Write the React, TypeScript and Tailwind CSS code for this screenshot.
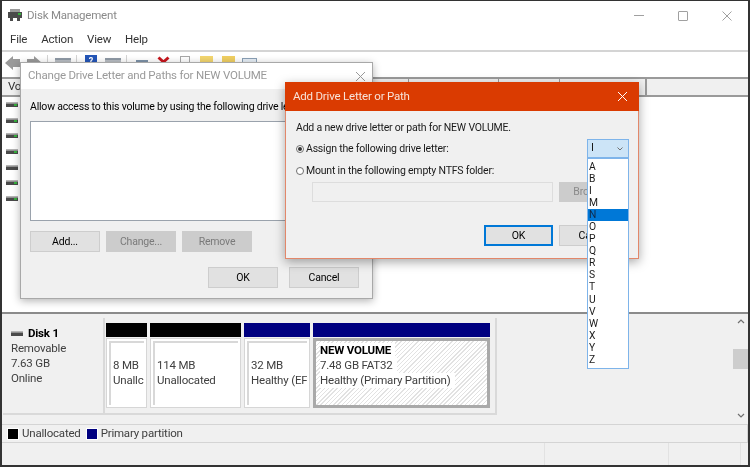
// App.tsx
// Disk Management window with the two drive letter dialogs open

const font = { fontFamily: 'Roboto, "Noto Sans", sans-serif' };

const LETTERS = ["A", "B", "I", "M", "N", "O", "P", "Q", "R", "S", "T", "U", "V", "W", "X", "Y", "Z"];

function DiskIcon({ led = true }: { led?: boolean }) {
  return (
    <svg width="12" height="6" viewBox="0 0 12 6">
      <rect x="0" y="0" width="12" height="1.5" fill="#b5b5b5" />
      <rect x="0" y="1.5" width="12" height="3.5" fill="#4a4a4a" />
      {led && <rect x="8" y="2" width="3" height="2" fill="#35b13c" />}
    </svg>
  );
}

function Toolbar() {
  return (
    <div className="flex h-[25px] items-start bg-white pl-[3px] pt-[3px]">
      <svg width="38" height="16" viewBox="0 0 38 16">
        <path d="M0 8 L8 1 V4 H15 V12 H8 V15 Z" fill="#9a9a9a" />
        <path d="M37 8 L29 1 V4 H22 V12 H29 V15 Z" fill="#9a9a9a" />
      </svg>
      <div className="ml-[4px] h-[18px] w-px bg-[#d4d4d4]" />
      <div className="ml-[7px] mt-[3px] h-[12px] w-[16px] border-t-2 border-[#8f9aa6] bg-[#b9bec4]" />
      <div className="ml-[5px] h-[18px] w-px bg-[#d4d4d4]" />
      <div className="ml-[8px] flex h-[14px] w-[12px] items-center justify-center bg-[#2456b8] text-[9px] font-bold text-white">?</div>
      <div className="ml-[8px] mt-[3px] h-[12px] w-[16px] border-t-2 border-[#8f9aa6] bg-[#b9bec4]" />
      <div className="ml-[5px] h-[18px] w-px bg-[#d4d4d4]" />
      <div className="ml-[9px] mt-[5px] h-[10px] w-[12px] border-t-2 border-[#7e93a8] bg-[#c5ccd3]" />
      <svg className="ml-[9px] mt-[1px]" width="13" height="12" viewBox="0 0 13 12">
        <path d="M1.5 1.5 L11.5 10.5 M11.5 1.5 L1.5 10.5" stroke="#c8161d" strokeWidth="3" />
      </svg>
      <div className="ml-[10px] mt-[1px] h-[14px] w-[10px] border border-[#a8a8a8] bg-white" />
      <div className="ml-[10px] mt-[1px] h-[12px] w-[13px] bg-[#f3d66f]" />
      <div className="ml-[9px] mt-[1px] h-[12px] w-[13px] bg-[#f0cf62]" />
      <div className="ml-[7px] mt-[3px] h-[12px] w-[15px] border border-[#8aa0b5] bg-[#e6eef6]" />
    </div>
  );
}

function Partition({ width, color, lines, className = "" }: { width: string; color: string; lines: string[]; className?: string }) {
  return (
    <div className={`flex flex-col ${width} ${className}`}>
      <div className={`h-[14px] ${color}`} />
      <div className="mt-[1px] h-[72px] overflow-hidden whitespace-nowrap border border-[#d6d6d6] bg-white p-[2px]">
        <div className="h-full overflow-hidden border-l-2 border-t-2 border-[#d8d8d8] pl-[2px] pt-[15px]">
          {lines.map((l) => (
            <div key={l}>{l}</div>
          ))}
        </div>
      </div>
    </div>
  );
}

function DiskPanel() {
  return (
    <div className="flex h-[112px] border-t-2 border-[#8b8b8b] bg-[#f0f0f0]">
      <div className="flex flex-1 items-start pl-px pt-[4px]">
        {/* Disk info card */}
        <div className="h-[97px] w-[102px] border-b-2 border-r-2 border-[#d9d9d9] bg-[#f0f0f0] pl-[8px] pt-[8px] text-[11.5px] leading-[15px] text-[#404040]">
          <div className="flex items-center gap-[5px] font-bold text-black">
            <DiskIcon led={false} />
            <span>Disk 1</span>
          </div>
          <div>Removable</div>
          <div>7.63 GB</div>
          <div>Online</div>
        </div>

        {/* Partition map */}
        <div className="flex h-[97px] border-b-2 border-r-2 border-[#d9d9d9] pb-[5px] pl-px pr-[5px] pt-[5px] text-[11.5px] leading-[15px] text-[#404040]">
          <Partition width="w-[41px]" color="bg-black" lines={["8 MB", "Unallc"]} />
          <Partition width="w-[91px]" color="bg-black" lines={["114 MB", "Unallocated"]} className="ml-[3px]" />
          <Partition width="w-[66px]" color="bg-[#000080]" lines={["32 MB", "Healthy (EF"]} className="ml-[3px]" />
          <div className="ml-[3px] flex w-[177px] flex-col">
            <div className="h-[14px] bg-[#000080]" />
            <div
              className="mt-[1px] h-[72px] border-[3px] border-[#a9a9a9] pl-[4px] pt-[2px] text-[#404040]"
              style={{ backgroundImage: "repeating-linear-gradient(135deg, #e2e2e2 0 1px, #ffffff 1px 3px)" }}
            >
              <div className="w-max bg-white pr-1 font-bold text-black">NEW VOLUME</div>
              <div className="w-max bg-white pr-1">7.48 GB FAT32</div>
              <div className="w-max bg-white pr-1">Healthy (Primary Partition)</div>
            </div>
          </div>
        </div>
      </div>

      {/* Scrollbar */}
      <div className="flex w-[15px] flex-col items-center pb-[6px] pt-[5px]">
        <svg width="8" height="5" viewBox="0 0 8 5"><path d="M1 4 L4 1 L7 4" fill="none" stroke="#707070" strokeWidth="1.2" /></svg>
        <div className="mt-[25px] h-[20px] w-[15px] bg-[#cdcdcd]" />
        <svg className="mt-auto" width="8" height="5" viewBox="0 0 8 5"><path d="M1 1 L4 4 L7 1" fill="none" stroke="#707070" strokeWidth="1.2" /></svg>
      </div>
    </div>
  );
}

function DialogButton({ label, disabled, className = "" }: { label: string; disabled?: boolean; className?: string }) {
  return (
    <div
      className={`flex h-[21px] w-[70px] items-center justify-center border text-[10.5px] ${className} ${
        disabled ? "border-[#cccccc] bg-[#cccccc] text-[#7a7a7a]" : "border-[#cdcdcd] bg-[#e1e1e1] text-black"
      }`}
    >
      {label}
    </div>
  );
}

function ChangeLetterDialog() {
  return (
    <div className="absolute left-[18px] top-[61px] h-[237px] w-[353px] border border-[#a8a8a8] bg-[#f0f0f0] shadow-[0_2px_8px_rgba(0,0,0,0.3)]">
      <div className="flex h-[26px] items-center justify-between bg-white pl-[7px] pr-[6px] text-[11.5px] text-[#9a9a9a]">
        <span>Change Drive Letter and Paths for NEW VOLUME</span>
        <svg width="11" height="11" viewBox="0 0 11 11"><path d="M1 1 L10 10 M10 1 L1 10" stroke="#9a9a9a" strokeWidth="1" /></svg>
      </div>
      <div className="px-[9px] pt-[10px] text-[10.5px] text-black">
        <div className="whitespace-nowrap leading-[16px]">Allow access to this volume by using the following drive letter and paths:</div>
        <div className="mt-[6px] h-[100px] w-[320px] border border-[#9aa2ac] bg-white" />
        <div className="mt-[10px] flex gap-[6px]">
          <DialogButton label="Add..." />
          <DialogButton label="Change..." disabled />
          <DialogButton label="Remove" disabled />
        </div>
        <div className="mt-[15px] flex justify-end gap-[11px] pr-[4px]">
          <DialogButton label="OK" />
          <DialogButton label="Cancel" />
        </div>
      </div>
    </div>
  );
}

function Radio({ checked }: { checked?: boolean }) {
  return (
    <span className="mr-[2px] flex h-[8px] w-[8px] items-center justify-center rounded-full border border-[#6f6f6f] bg-white">
      {checked && <span className="h-[4px] w-[4px] rounded-full bg-[#333333]" />}
    </span>
  );
}

function AddLetterDialog() {
  return (
    <div className="absolute left-[283px] top-[81px] h-[177px] w-[354px] border-x border-b border-[#e2876a] bg-[#f0f0f0] shadow-[0_3px_10px_rgba(0,0,0,0.35)]">
      <div className="-mx-px flex h-[29px] items-center justify-between bg-[#da3b01] pl-[8px] pr-[11px] text-[11.5px] text-[#f8e2d8]">
        <span>Add Drive Letter or Path</span>
        <svg width="11" height="11" viewBox="0 0 11 11"><path d="M1 1 L10 10 M10 1 L1 10" stroke="#ffffff" strokeWidth="1" /></svg>
      </div>
      <div className="pl-[10px] pt-[10px] text-[10.5px] leading-[14px] text-[#1a1a1a]">
        <div>Add a new drive letter or path for NEW VOLUME.</div>
        <div className="mt-[7px] flex items-center">
          <Radio checked />
          <span>Assign the following drive letter:</span>
        </div>
        <div className="mt-[8px] flex items-center">
          <Radio />
          <span>Mount in the following empty NTFS folder:</span>
        </div>
        <div className="mt-[4px] flex pl-[16px]">
          <div className="h-[20px] w-[241px] border border-[#dddddd] bg-[#f0f0f0]" />
          <div className="ml-[6px] flex h-[20px] w-[70px] items-center justify-center bg-[#cccccc] text-[#8a8a8a]">Browse...</div>
        </div>
        <div className="mt-[23px] flex pl-[188px]">
          <div className="flex h-[21px] w-[69px] items-center justify-center border-2 border-[#0078d7] bg-[#e1e1e1] text-black">OK</div>
          <div className="ml-[6px] flex h-[21px] w-[70px] items-center justify-center border border-[#cdcdcd] bg-[#e1e1e1] text-black">Cancel</div>
        </div>
      </div>
    </div>
  );
}

function LetterDropdown() {
  return (
    <div className="absolute left-[585px] top-[138px] w-[42px] tracking-normal text-[#1a1a1a]">
      <div className="flex h-[19px] items-center justify-between border border-[#7eb4ea] bg-[#cce4f7] pl-[3px] pr-[5px] text-[11px]">
        <span>I</span>
        <svg width="6" height="4" viewBox="0 0 6 4"><path d="M0.5 0.5 L3 3 L5.5 0.5" fill="none" stroke="#707070" strokeWidth="1" /></svg>
      </div>
      <div className="border border-[#7eb4ea] bg-white py-[1.5px] text-[10.3px] leading-[12.1px]">
        {LETTERS.map((l) => (
          <div key={l} className={l === "N" ? "bg-[#0078d7] pl-px text-[#0f2a4a]" : "pl-px"}>
            {l}
          </div>
        ))}
      </div>
    </div>
  );
}

export default function App() {
  return (
    <div className="relative h-[467px] w-[750px] overflow-hidden border-x-2 border-b-2 border-t border-[#333333] bg-white tracking-[-0.2px] blur-[0.3px]" style={font}>
      {/* Title bar */}
      <div className="flex h-[31px] items-center justify-between pb-[2px] pl-[6px] pr-[16px] text-[11.5px] text-[#8a8a8a]">
        <div className="flex items-center gap-[5px]">
          <svg width="14" height="13" viewBox="0 0 14 13">
            <rect x="0" y="3" width="14" height="6" fill="#4a4a4a" />
            <rect x="2" y="0" width="10" height="3" fill="#9a9a9a" />
            <rect x="10" y="4" width="3" height="2" fill="#35b13c" />
            <rect x="2" y="9" width="3" height="3" fill="#4a4a4a" />
            <rect x="9" y="9" width="3" height="3" fill="#4a4a4a" />
          </svg>
          <span>Disk Management</span>
        </div>
        <div className="flex items-center gap-[34px]">
          <div className="h-px w-[10px] bg-[#a0a0a0]" />
          <div className="h-[10px] w-[10px] rounded-[1px] border border-[#a0a0a0]" />
          <svg width="10" height="10" viewBox="0 0 10 10"><path d="M0.5 0.5 L9.5 9.5 M9.5 0.5 L0.5 9.5" stroke="#a0a0a0" strokeWidth="1" /></svg>
        </div>
      </div>

      {/* Menu bar */}
      <div className="flex h-[16px] items-center gap-[14px] pl-[8px] text-[11.5px] text-[#333333]">
        <span>File</span>
        <span>Action</span>
        <span>View</span>
        <span>Help</span>
      </div>
      <div className="mt-[2px] h-[2px] bg-[#d4d4d4]" />
      <Toolbar />

      {/* Volume list */}
      <div className="flex h-[20px] border-y-2 border-[#9a9a9a] bg-[#f0f0f0] text-[11.5px] leading-[15px] text-[#333333]">
        <div className="w-[406px] pl-[6px]">Volume</div>
        <div className="w-[90px] border-l border-[#9a9a9a]" />
        <div className="w-[61px] border-l border-[#9a9a9a]" />
        <div className="w-[86px] border-l border-[#9a9a9a]" />
        <div className="flex-1 border-l-2 border-[#9a9a9a]" />
      </div>
      <div className="flex h-[215px] flex-col gap-[9.7px] bg-white pl-[4px] pt-[5px]">
        {[0, 1, 2, 3, 4, 5, 6].map((i) => (
          <DiskIcon key={i} led={i !== 4} />
        ))}
      </div>

      <DiskPanel />

      {/* Legend */}
      <div className="flex h-[19px] items-center border-y border-r border-[#d4d4d4] bg-[#f0f0f0] pl-[5px] text-[11.5px] text-[#404040]">
        <div className="h-[12px] w-[12px] border border-white bg-black" />
        <span className="ml-[3px]">Unallocated</span>
        <div className="ml-[5px] h-[12px] w-[12px] border border-white bg-[#000080]" />
        <span className="ml-[3px]">Primary partition</span>
      </div>

      {/* Status bar */}
      <div className="flex h-[22px] justify-end bg-[#f0f0f0]">
        <div className="w-[124px] border-l border-[#e2e2e2]" />
        <div className="w-[72px] border-l border-[#e2e2e2]" />
        <div className="w-[8px] border-l border-[#e2e2e2]" />
      </div>

      <ChangeLetterDialog />
      <AddLetterDialog />
      <LetterDropdown />
    </div>
  );
}
